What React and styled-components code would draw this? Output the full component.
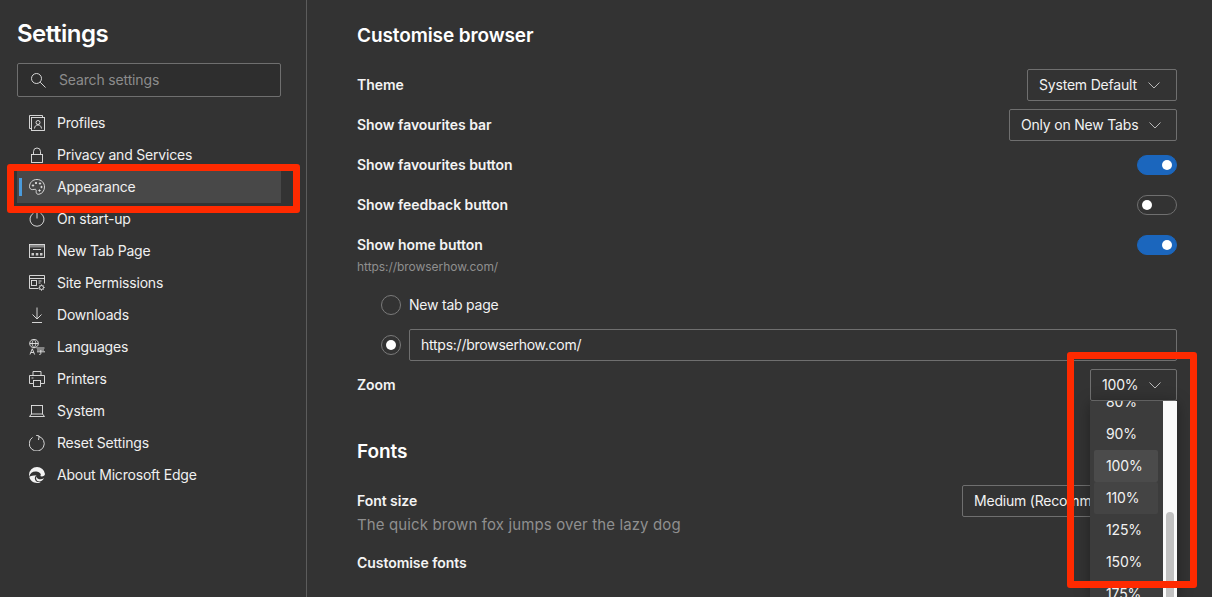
import React from "react";
import styled, { createGlobalStyle } from "styled-components";

const Global = createGlobalStyle`
  html, body { margin: 0; padding: 0; height: 597px; overflow: hidden; background: #333333; }
  * { box-sizing: border-box; }
  body { font-family: Inter, "Liberation Sans", sans-serif; color: #f2f2f2; -webkit-font-smoothing: antialiased; }
`;
const Page = styled.div`
  position: relative; display: flex; width: 1212px; height: 597px; overflow: hidden; background: #333333;
`;
const Sidebar = styled.aside`
  width: 307px; flex: none; padding: 17px 25px 0 17px; border-right: 1px solid #5c5c5c;
`;
const Title = styled.h1`
  margin: 0 0 12px; font-size: 24px; line-height: 34px; font-weight: 600; color: #fff; letter-spacing: -0.5px;
`;
const Search = styled.div`
  display: flex; align-items: center; gap: 13px; height: 34px; padding: 0 0 1px 12px; margin-bottom: 10px;
  background: #2e2e2e; border: 1px solid #6f6f6f; border-radius: 2px;
  font-size: 14px; color: #8c8c8c; letter-spacing: -0.15px;
`;
const Nav = styled.nav`display: flex; flex-direction: column;`;
const NavItem = styled.div`
  position: relative; display: flex; align-items: center; gap: 12px; height: 32px; padding: 0 0 1px 12px;
  font-size: 14px; color: #f0f0f0; letter-spacing: -0.2px;
  background: ${p => (p.$active ? "#484848" : "transparent")};
  ${p => p.$active && `&::before { content: ""; position: absolute; left: 2px; top: 7px; width: 3px; height: 18px; background: #4a9bdc; }`}
`;
const Ico = styled.svg`
  width: 16px; height: 16px; flex: none; fill: none; stroke: #e6e6e6; stroke-width: 0.9;
`;
const Main = styled.main`
  flex: 1; padding: 19px 35px 0 50px;
`;
const Heading = styled.h2`
  margin: 0; font-size: 19px; line-height: 34px; font-weight: 600; color: #fff; letter-spacing: -0.1px;
`;
const SectionHead = styled(Heading)`margin: 30px 0 16px;`;
const Row = styled.div`
  display: flex; align-items: center; justify-content: space-between; height: 40px;
`;
const FirstRows = styled.div`margin-top: 12px;`;
const Label = styled.div`font-size: 14px; font-weight: 600; color: #f4f4f4; letter-spacing: -0.05px; padding-bottom: 2px;`;
const Hint = styled.div`font-size: 12px; line-height: 14px; color: #8f8f8f; margin-top: -5px; letter-spacing: -0.05px;`;
const SelectBox = styled.div`
  display: flex; align-items: center; justify-content: space-between; gap: 11px; height: 32px; padding: 0 16px 2px 11px;
  width: ${p => p.$w}px; border: 1px solid #6f6f6f; border-radius: 2px; font-size: 14px; color: #f2f2f2; white-space: nowrap;
  background: #333333; letter-spacing: -0.2px;
`;
const Chevron = styled.svg`width: 12px; height: 7px; margin-top: 2px; flex: none; fill: none; stroke: #b8b8b8; stroke-width: 1;`;
const Toggle = styled.div`
  position: relative; width: 40px; height: 20px; border-radius: 10px;
  background: ${p => (p.$on ? "#1b66bd" : "transparent")};
  border: 1px solid ${p => (p.$on ? "#1b66bd" : "#6f6f6f")};
  &::after {
    content: ""; position: absolute; top: 4px; ${p => (p.$on ? "right: 4px" : "left: 4px")};
    width: 10px; height: 10px; border-radius: 50%; background: #fff;
  }
`;
const RadioRows = styled.div`
  display: flex; flex-direction: column; padding-left: 24px; margin-top: 11px;
`;
const RadioRow = styled.div`display: flex; align-items: center; gap: 8px; height: 40px; font-size: 14px; color: #f2f2f2; letter-spacing: -0.22px;`;
const RadioText = styled.span`padding-bottom: 2px;`;
const Radio = styled.div`
  display: flex; align-items: center; justify-content: center; flex: none;
  width: 20px; height: 20px; border-radius: 50%; border: 1px solid #7a7a7a;
  &::after { content: ""; display: ${p => (p.$on ? "block" : "none")}; width: 10px; height: 10px; border-radius: 50%; background: #fff; }
`;
const UrlInput = styled.div`
  flex: 1; display: flex; align-items: center; height: 32px; padding: 0 0 2px 11px;
  border: 1px solid #6f6f6f; border-radius: 2px; font-size: 14px; color: #f5f5f5; letter-spacing: -0.25px;
`;
const FontSample = styled.div`font-size: 15px; line-height: 20px; color: #8f8f8f; margin-top: -2px; letter-spacing: 0.12px;`;
const FontRow = styled(Row)`height: 32px; align-items: center;`;
const LastLabel = styled(Label)`margin-top: 19px;`;
const Dropdown = styled.div`
  position: absolute; left: 1090px; top: 401px; width: 87px; height: 196px; display: flex; overflow: hidden;
  background: #3c3c3c; box-shadow: 0 2px 14px rgba(0,0,0,.35);
`;
const OptionList = styled.div`flex: 1; padding: 0 5px 0 4px; margin-top: -15px;`;
const Option = styled.div`
  display: flex; align-items: center; height: 32px; padding: 0 0 2px 12px; font-size: 14px; color: #f2f2f2; border-radius: 2px; letter-spacing: -0.15px;
  background: ${p => p.$bg || "transparent"};
`;
const ScrollTrack = styled.div`
  position: relative; width: 14px; flex: none; background: #fafafa;
`;
const ScrollThumb = styled.div`
  position: absolute; left: 3px; top: 111px; width: 8px; height: 100px; border-radius: 4px; background: #c1c1c1;
`;
const Callout = styled.div`
  position: absolute; border: 7px solid #ff2a00; border-radius: 3px; pointer-events: none;
  left: ${p => p.$x}px; top: ${p => p.$y}px; width: ${p => p.$w}px; height: ${p => p.$h}px;
`;

const icons = {
  search: <><circle cx="6.5" cy="6.5" r="5" /><path d="M10.2 10.2 15.5 15.5" /></>,
  profiles: <><path d="M2.5 13.5H.5V.5h13v2" /><rect x="2.5" y="2.5" width="13" height="13" /><circle cx="9" cy="7.5" r="2" /><path d="M5.5 13.5c.3-2.5 1.5-3.5 3.5-3.5s3.2 1 3.5 3.5" /></>,
  lock: <><rect x="2.5" y="7.5" width="11" height="8" /><path d="M4.5 7.5V4.5a3.5 3.5 0 0 1 7 0v3" /></>,
  palette: <><path d="M8 .5C3.5.5.5 3.8.5 7.6c0 1.8 1.3 3 2.8 3 1.3 0 2.4-.5 3.3-.2 1 .4.4 1.6.6 2.9.2 1.4 1.2 2.2 2.6 2 3.4-.5 5.7-3.6 5.7-7.3C15.5 3.8 12.4.5 8 .5z" /><circle cx="4" cy="6.5" r=".7" fill="#eee" /><circle cx="7" cy="4" r=".7" fill="#eee" /><circle cx="11" cy="4.500" r=".7" fill="#eee" /><circle cx="12.500" cy="8" r=".7" fill="#eee" /><circle cx="10.500" cy="11.500" r=".7" fill="#eee" /></>,
  power: <><path d="M4.500 2.200a7 7 0 1 0 7 0" /><path d="M8 .5v7" /></>,
  newtab: <><rect x=".5" y="1.500" width="15" height="13" /><rect x="1" y="2" width="14" height="2.500" fill="#eee" stroke="none" opacity=".45" /><path d="M4 6.500h8" /><path d="M2.500 10h2.500v2.500H2.500zM6.800 10h2.500v2.500H6.800zM11 10h2.500v2.500H11z" fill="#eee" stroke="none" opacity=".8" /></>,
  site: <><path d="M9.500 13.500H.5V.5h15v8" /><path d="M.5 3.500h15" /><rect x="2.500" y="5.500" width="5" height="5" /><path d="M9.500 6h3M9.500 8h2" /><circle cx="12.500" cy="12.500" r="2" /><path d="M12.500 9.500v1M12.500 14.500v1.200M9.700 12.500h.8M14.500 12.500h1.200M10.500 10.500l.6.6M14 14l.6.6M14.600 10.500l-.6.6M11 14l-.6.6" /></>,
  download: <><path d="M8 .5v11M3.500 7.500 8 12l4.500-4.500" /><path d="M3 15.500h10" /></>,
  languages: <><circle cx="5" cy="4.500" r="4.300" /><path d="M.7 4.500h8.600M5 .2c-2.400 2.600-2.400 5.900 0 8.600M5 .2c2.400 2.600 2.400 5.900 0 8.600" /><path d="M1 15.500 3.300 9.800 5.600 15.500M1.800 13.500h3" /><path d="M7.500 9h8M8 11h7M8 12.800h8M11.800 11v3.800c0 .6-.7.800-1.500.6" /></>,
  printer: <><path d="M4 4.500V.5h8v4" /><path d="M4 12.500H.5v-8h15v8H12" /><rect x="4.500" y="9.500" width="7" height="6" /><path d="M2.500 7h2" /></>,
  laptop: <><rect x="2.500" y="2.500" width="11" height="8.500" /><path d="M2.500 11 .5 13.500h15L13.500 11" /></>,
  reset: <><path d="M9.500 1.300A7.500 7.500 0 1 1 3.500 2.400" /><path d="M9.500 5 10.200 1 7 .2" /></>,
};

const EdgeIcon = () => (
  <Ico viewBox="0 0 16 16">
    <path d="M8 0a8 8 0 0 0-8 8c0 .5 0 1 .2 1.400C1 6.500 3.500 4.500 6.500 4.500c2.800 0 5.300 1.400 5.300 3.300 0 .6-.3 1-.6 1.200 1 .6 2.700.5 3.800-.2.500-.4 1-1 1-1.800A8 8 0 0 0 8 0z" fill="#f2f2f2" stroke="none" />
    <path d="M.3 9.800C.9 13.400 4.200 16 8 16c1.500 0 3-.4 4.200-1.300-2.400.9-5 .2-6-1.800-.9-1.800-.1-3.900 1.400-4.700-3.400.1-6.200 1-7.300 1.600z" fill="#f2f2f2" stroke="none" />
    <path d="M8.500 14c2 1 4.700.2 6.500-2.800-2 1.300-4.300 1.400-6 .5-1-.5-1.600-1.300-1.800-2.200-.5 1.900.1 3.600 1.300 4.500z" fill="#f2f2f2" stroke="none" />
  </Ico>
);

const nav = [
  ["profiles", "Profiles"], ["lock", "Privacy and Services"], ["palette", "Appearance"], ["power", "On start-up"],
  ["newtab", "New Tab Page"], ["site", "Site Permissions"], ["download", "Downloads"], ["languages", "Languages"],
  ["printer", "Printers"], ["laptop", "System"], ["reset", "Reset Settings"],
];

const Chev = () => <Chevron viewBox="0 0 12 7"><path d="M.5.5 6 6 11.500.5" /></Chevron>;

export default function App() {
  return (
    <Page>
      <Global />
      <Sidebar>
        <Title>Settings</Title>
        <Search><Ico viewBox="0 0 16 16">{icons.search}</Ico>Search settings</Search>
        <Nav>
          {nav.map(([k, t]) => (
            <NavItem key={t} $active={t === "Appearance"}>
              <Ico viewBox="0 0 16 16">{icons[k]}</Ico>{t}
            </NavItem>
          ))}
          <NavItem><EdgeIcon />About Microsoft Edge</NavItem>
        </Nav>
      </Sidebar>
      <Main>
        <Heading>Customise browser</Heading>
        <FirstRows>
          <Row><Label>Theme</Label><SelectBox $w={150}>System Default<Chev /></SelectBox></Row>
          <Row><Label>Show favourites bar</Label><SelectBox $w={168}>Only on New Tabs<Chev /></SelectBox></Row>
          <Row><Label>Show favourites button</Label><Toggle $on /></Row>
          <Row><Label>Show feedback button</Label><Toggle /></Row>
          <Row><Label>Show home button</Label><Toggle $on /></Row>
        </FirstRows>
        <Hint>https://browserhow.com/</Hint>
        <RadioRows>
          <RadioRow><Radio /><RadioText>New tab page</RadioText></RadioRow>
          <RadioRow><Radio $on /><UrlInput>https://browserhow.com/</UrlInput></RadioRow>
        </RadioRows>
        <Row><Label>Zoom</Label><SelectBox $w={87}>100%<Chev /></SelectBox></Row>
        <SectionHead>Fonts</SectionHead>
        <FontRow>
          <Label>Font size</Label>
          <SelectBox $w={215}>Medium (Recommended)<Chev /></SelectBox>
        </FontRow>
        <FontSample>The quick brown fox jumps over the lazy dog</FontSample>
        <LastLabel>Customise fonts</LastLabel>
      </Main>
      <Dropdown>
        <OptionList>
          <Option>80%</Option>
          <Option>90%</Option>
          <Option $bg="#4b4b4b">100%</Option>
          <Option $bg="#444444">110%</Option>
          <Option>125%</Option>
          <Option>150%</Option>
          <Option>175%</Option>
        </OptionList>
        <ScrollTrack><ScrollThumb /></ScrollTrack>
      </Dropdown>
      <Callout $x={7} $y={164} $w={293} $h={49} />
      <Callout $x={1067} $y={352} $w={130} $h={236} />
    </Page>
  );
}
